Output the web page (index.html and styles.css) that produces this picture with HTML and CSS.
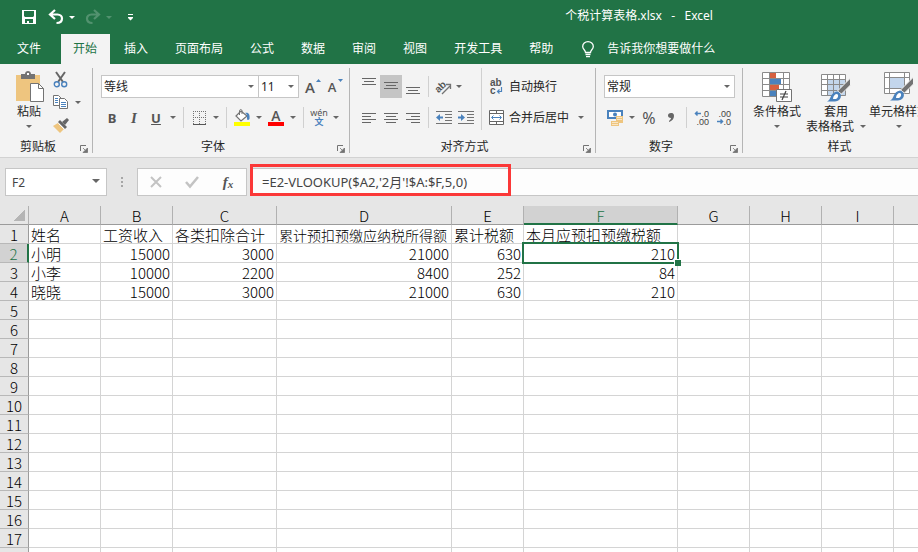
FILE: index.html
```html
<!DOCTYPE html>
<html lang="zh-CN">

  <head>
    <meta charset="UTF-8">
    <meta name="viewport" content="width=device-width, initial-scale=1.0">
    <title>个税计算表格.xlsx - Excel</title>
    <link rel="stylesheet" href="styles.css">
  </head>

  <body>
    <!-- 标题栏 -->
    <header class="titlebar">
      <div class="quick">
        <button class="tool" aria-label="保存">
          <svg width="14" height="14" viewBox="0 0 14 14"><path fill="#fff" fill-rule="evenodd" d="M0 0h14v14H0zM2 1v5l1 1h8l1-1V1zM3 9v4h2v-2h2v2h4V9z"/></svg>
        </button>
        <div class="split">
          <button class="tool" aria-label="撤消">
            <svg width="16" height="14" viewBox="0 0 16 14"><path d="M7 0L2 4.500L7 9M2.500 4.500H9.500C12.500 4.500 14 6.500 14 8.500C14 11 12 13 8.500 13" fill="none" stroke="#fff" stroke-width="2.200"/></svg>
          </button>
          <button class="drop" aria-label="撤消列表"></button>
        </div>
        <div class="split faded">
          <button class="tool" aria-label="恢复">
            <svg width="16" height="14" viewBox="0 0 16 14"><path d="M9 0L14 4.500L9 9M13.500 4.500H6.500C3.500 4.500 2 6.500 2 8.500C2 11 4 13 7.500 13" fill="none" stroke="#fff" stroke-width="2.200"/></svg>
          </button>
          <button class="drop" aria-label="恢复列表"></button>
        </div>
        <button class="tool" aria-label="自定义快速访问工具栏">
          <svg width="5" height="7" viewBox="0 0 5 7"><path d="M0 0h5v1H0zM0 3h5v1L2.500 6.500L0 4z" fill="#fff"/></svg>
        </button>
      </div>
      <div class="title">个税计算表格.xlsx&nbsp;&nbsp; - &nbsp;&nbsp;Excel</div>
    </header>

    <!-- 选项卡 -->
    <nav class="tabs">
      <button class="tab file">文件</button>
      <button class="tab on">开始</button>
      <button class="tab">插入</button>
      <button class="tab">页面布局</button>
      <button class="tab">公式</button>
      <button class="tab">数据</button>
      <button class="tab">审阅</button>
      <button class="tab">视图</button>
      <button class="tab">开发工具</button>
      <button class="tab">帮助</button>
      <button class="tell">
        <svg width="12" height="17" viewBox="0 0 12 17"><path d="M3.500 11.500C3.500 9 .7 8.500 .7 5.500a5.300 4.900 0 0 1 10.600 0C11.300 8.500 8.500 9 8.500 11.500zM3.500 13.500h5M4 15.700h4" fill="none" stroke="#fff" stroke-width="1.300"/></svg>
        告诉我你想要做什么
      </button>
    </nav>

    <!-- 功能区 -->
    <div class="ribbon">
      <section class="group clipboard">
        <div class="body">
          <button class="big paste">
            <svg width="30" height="31" viewBox="0 0 30 31">
              <path d="M2 4h24v26H2z" fill="#eec57f"/>
              <path d="M7 3h4c0-4 6-4 6 0h4v5H7z" fill="#737373"/>
              <path d="M13 2h2v2h-2z" fill="#fff"/>
              <path d="M16.500 12.500h8l5 5v13h-13z" fill="#fff" stroke="#737373"/>
              <path d="M24.500 12.500v5h5" fill="none" stroke="#737373"/>
            </svg>
            <span>粘贴</span>
            <i class="arrow"></i>
          </button>
          <div class="edit">
            <button class="tool" aria-label="剪切">
              <svg width="16" height="16" viewBox="0 0 16 16"><path d="M3 0l7 10M12 0L5 10" stroke="#666" stroke-width="2"/><circle cx="3.800" cy="12.300" r="2.500" fill="none" stroke="#4a82bd" stroke-width="1.400"/><circle cx="11.200" cy="12.300" r="2.500" fill="none" stroke="#4a82bd" stroke-width="1.400"/></svg>
            </button>
            <div class="split">
              <button class="tool" aria-label="复制">
                <svg width="16" height="15" viewBox="0 0 16 15"><path d="M.5.500h5l3 3v7h-8z" fill="#fff" stroke="#737373"/><path d="M2 3.500h3M2 5.500h3M2 7.500h3" stroke="#4a82bd"/><path d="M6.500 3.500h5l3 3v7h-8z" fill="#fff" stroke="#737373"/><path d="M8 7.500h5M8 9.500h5M8 11.500h5" stroke="#4a82bd"/></svg>
              </button>
              <button class="drop" aria-label="复制选项"></button>
            </div>
            <button class="tool" aria-label="格式刷">
              <svg width="16" height="15" viewBox="0 0 16 15"><path d="M0 8l5-3 6 6-4 4z" fill="#eec57f"/><path d="M5 4l2-2 7 7-2 2z" fill="#666"/><path d="M9 4l5-4 2 2-4 5z" fill="#666"/><path d="M5.500 5.500l5.500 5.500" stroke="#fff"/></svg>
            </button>
          </div>
        </div>
        <footer><span>剪贴板</span><button class="launch" aria-label="剪贴板设置"><svg width="8" height="8" viewBox="0 0 8 8"><path d="M.5 6V.500H6" fill="none" stroke="#737373"/><path d="M3 3l2 2M7.500 3v4.500H3z" fill="#737373" stroke="#737373" stroke-width=".8"/></svg></button></footer>
      </section>

      <section class="group font">
        <div class="body rows">
          <div class="row">
            <span class="combo family"><select aria-label="字体"><option>等线</option></select></span>
            <span class="combo size"><select aria-label="字号"><option>11</option></select></span>
            <button class="tool" aria-label="增大字号"><span class="letter big-a">A</span><svg class="mark" width="5" height="3" viewBox="0 0 5 3"><path d="M0 3L2.500 0L5 3z" fill="#4a82bd"/></svg></button>
            <button class="tool" aria-label="减小字号"><span class="letter">A</span><svg class="mark" width="5" height="3" viewBox="0 0 5 3"><path d="M0 0L2.500 3L5 0z" fill="#4a82bd"/></svg></button>
          </div>
          <div class="row">
            <button class="tool bold">B</button>
            <button class="tool italic">I</button>
            <button class="tool under">U</button>
            <button class="drop" aria-label="下划线类型"></button>
            <i class="sep"></i>
            <button class="tool" aria-label="边框">
              <svg width="13" height="14" viewBox="0 0 13 14" shape-rendering="crispEdges"><path d="M0 .500h13M0 6.500h13M.5 0v13M6.500 0v13M12.500 0v13" stroke="#737373" stroke-dasharray="1 1"/><path d="M0 13h13" stroke="#555" stroke-width="1"/></svg>
            </button>
            <button class="drop" aria-label="边框类型"></button>
            <i class="sep"></i>
            <button class="tool" aria-label="填充颜色">
              <svg width="16" height="17" viewBox="0 0 16 17"><path d="M2 7l5-5 6 5-6 5z" fill="#fff" stroke="#737373" stroke-width="1.200"/><path d="M5.500 6V2C5.500 0 8 0 8 2v3" fill="none" stroke="#737373"/><path d="M11 4c4-1 5 2 4.500 6-1.500 2-2.500 1-2.500-1 0-3 0-4-2-5z" fill="#4a82bd"/><path d="M0 13h16v4H0z" fill="#ff0"/></svg>
            </button>
            <button class="drop" aria-label="更多填充颜色"></button>
            <button class="tool stack" aria-label="字体颜色"><span class="letter color-a">A</span><i class="swatch"></i></button>
            <button class="drop" aria-label="更多字体颜色"></button>
            <i class="sep"></i>
            <button class="tool stack pinyin" aria-label="拼音"><span>wén</span><b>文</b></button>
            <button class="drop" aria-label="拼音选项"></button>
          </div>
        </div>
        <footer><span>字体</span><button class="launch" aria-label="字体设置"><svg width="8" height="8" viewBox="0 0 8 8"><path d="M.5 6V.500H6" fill="none" stroke="#737373"/><path d="M3 3l2 2M7.500 3v4.500H3z" fill="#737373" stroke="#737373" stroke-width=".8"/></svg></button></footer>
      </section>

      <section class="group align">
        <div class="body">
          <div class="rows">
            <div class="row">
              <button class="tool" aria-label="顶端对齐"><svg width="14" height="18" viewBox="0 0 14 18"><path d="M0 .500h14M2 3.500h10M0 6.500h14" stroke="#666"/></svg></button>
              <button class="tool pressed" aria-label="垂直居中"><svg width="14" height="18" viewBox="0 0 14 18"><path d="M0 4.500h14M2 7.500h10M0 10.500h14" stroke="#666"/></svg></button>
              <button class="tool" aria-label="底端对齐"><svg width="14" height="18" viewBox="0 0 14 18"><path d="M0 9.500h14M2 12.500h10M0 15.500h14" stroke="#666"/></svg></button>
              <i class="sep"></i>
              <button class="tool" aria-label="方向"><svg width="18" height="18" viewBox="0 0 18 18"><text x="0" y="11" transform="rotate(-45 7 9)" class="tilt">ab</text><path d="M7 16L15 8M11 6.500H15.500V11" fill="none" stroke="#737373" stroke-width="1.300"/></svg></button>
              <button class="drop tight" aria-label="方向选项"></button>
            </div>
            <div class="row">
              <button class="tool" aria-label="左对齐"><svg width="14" height="12" viewBox="0 0 14 12"><path d="M0 1.500h14M0 4.500h9M0 7.500h14M0 10.500h9" stroke="#666"/></svg></button>
              <button class="tool" aria-label="居中"><svg width="14" height="12" viewBox="0 0 14 12"><path d="M0 1.500h14M2 4.500h10M0 7.500h14M2 10.500h10" stroke="#666"/></svg></button>
              <button class="tool" aria-label="右对齐"><svg width="14" height="12" viewBox="0 0 14 12"><path d="M0 1.500h14M5 4.500h9M0 7.500h14M5 10.500h9" stroke="#666"/></svg></button>
              <i class="sep"></i>
              <button class="tool" aria-label="减少缩进"><svg width="16" height="14" viewBox="0 0 16 14"><path d="M0 .500h16M9 3.500h7M9 6.500h7M9 9.500h7M0 12.500h16" stroke="#737373"/><path d="M0 6.500L4 3v2.500h3v2H4V10z" fill="#4a82bd"/></svg></button>
              <button class="tool" aria-label="增加缩进"><svg width="16" height="14" viewBox="0 0 16 14"><path d="M0 .500h16M9 3.500h7M9 6.500h7M9 9.500h7M0 12.500h16" stroke="#737373"/><path d="M7 6.500L3 3v2.500H0v2h3V10z" fill="#4a82bd"/></svg></button>
            </div>
          </div>
          <div class="rows wide">
            <button class="text">
              <svg width="16" height="18" viewBox="0 0 16 18"><text x="1" y="8" class="mini">ab</text><text x="1" y="16" class="mini">c</text><path d="M12.500 9v4.500H8.500M10.500 11.500l-2 2 2 2" fill="none" stroke="#4a82bd" stroke-width="1.200"/></svg>
              自动换行
            </button>
            <div class="split">
              <button class="text">
                <svg width="16" height="16" viewBox="0 0 16 16"><path d="M.5.500h14v14H.500zM.5 3.500h14M.5 11.500h14M7.500 0v3.500M7.500 11.500v3.500" fill="#fff" stroke="#666"/><path d="M3 7.500h9M4.500 5.500l-2 2 2 2M10.500 5.500l2 2-2 2" fill="none" stroke="#4a82bd"/></svg>
                合并后居中
              </button>
              <button class="drop" aria-label="合并选项"></button>
            </div>
          </div>
        </div>
        <footer><span>对齐方式</span><button class="launch" aria-label="对齐设置"><svg width="8" height="8" viewBox="0 0 8 8"><path d="M.5 6V.500H6" fill="none" stroke="#737373"/><path d="M3 3l2 2M7.500 3v4.500H3z" fill="#737373" stroke="#737373" stroke-width=".8"/></svg></button></footer>
      </section>

      <section class="group number">
        <div class="body rows">
          <div class="row">
            <span class="combo format"><select aria-label="数字格式"><option>常规</option></select></span>
          </div>
          <div class="row">
            <button class="tool" aria-label="会计数字格式">
              <svg width="16" height="16" viewBox="0 0 16 16"><path d="M1 1h14v7H1z" fill="#fff" stroke="#4a82bd" stroke-width="2"/><circle cx="8" cy="4.500" r="2" fill="#4a82bd"/><path d="M9 6h7v7h-4v3H4v-5h5z" fill="#eec57f"/><path d="M10 7.500h5M10 9.500h5M5 12.500h6M5 14.500h6" stroke="#f9e6c6"/></svg>
            </button>
            <button class="drop" aria-label="更多货币"></button>
            <button class="tool percent">%</button>
            <button class="tool" aria-label="千位分隔样式"><svg width="6" height="9" viewBox="0 0 6 9"><path d="M3 0c3 0 3 2 3 3C6 6 4 8 1 9V8c1-1 2-2 2-3C-1 5-1 0 3 0z" fill="#666"/></svg></button>
            <i class="sep"></i>
            <button class="tool" aria-label="增加小数位数"><svg width="16" height="18" viewBox="0 0 16 18"><text x="15" y="8" text-anchor="end" class="digit">.0</text><text x="15" y="16" text-anchor="end" class="digit">.00</text><path d="M1 4.500h6M3.500 2.500l-2 2 2 2" fill="none" stroke="#4a82bd" stroke-width="1.500"/></svg></button>
            <button class="tool" aria-label="减少小数位数"><svg width="16" height="18" viewBox="0 0 16 18"><text x="15" y="8" text-anchor="end" class="digit">.00</text><text x="15" y="16" text-anchor="end" class="digit">.0</text><path d="M1 12.500h6M4.500 10.500l2 2-2 2" fill="none" stroke="#4a82bd" stroke-width="1.500"/></svg></button>
          </div>
        </div>
        <footer><span>数字</span><button class="launch" aria-label="数字设置"><svg width="8" height="8" viewBox="0 0 8 8"><path d="M.5 6V.500H6" fill="none" stroke="#737373"/><path d="M3 3l2 2M7.500 3v4.500H3z" fill="#737373" stroke="#737373" stroke-width=".8"/></svg></button></footer>
      </section>

      <section class="group styles">
        <div class="body">
          <button class="big">
            <svg width="30" height="31" viewBox="0 0 30 31">
              <path d="M.5 1.500h27v24H.500zM.5 7.500h27M.5 13.500h27M.5 19.500h27M7.500 1v24M21.500 1v24" fill="#fff" stroke="#8a8a8a"/>
              <path d="M8 2h6v5H8zM8 14h9v5H8z" fill="#d6603f"/><path d="M8 8h11v5H8zM8 20h6v5H8z" fill="#4a82bd"/>
              <path d="M14.500 18.500h15v12h-15z" fill="#fff" stroke="#737373"/>
              <path d="M18 23h8M18 26h8M24 20l-4 9" stroke="#444" stroke-width="1.200"/>
            </svg>
            <span>条件格式</span>
            <i class="arrow"></i>
          </button>
          <button class="big">
            <svg width="30" height="31" viewBox="0 0 30 31">
              <path d="M.5 3.500h24v21H.500z" fill="#fff"/><path d="M7 9h18v16H7z" fill="#c3d6ec"/>
              <path d="M.5 3.500h24v21H.500zM.5 8.500h24M.5 13.500h24M.5 19.500h24M6.500 3v22M12.500 3v22M18.500 3v22" fill="none" stroke="#8a8a8a"/>
              <path d="M29.500 7v7l-9 9-4-3z" fill="#737373" stroke="#f3f3f3"/>
              <path d="M6 30.500c4-1 3-9 10-10 6 1 5 10-2 10z" fill="#4a82bd"/><path d="M12 28c0-3 2-5 4-5 2 1 1 4-1 5z" fill="#fff"/>
            </svg>
            <span>套用</span>
            <span class="with-arrow">表格格式<i class="arrow"></i></span>
          </button>
          <button class="big">
            <svg width="30" height="31" viewBox="0 0 30 31">
              <path d="M.5 1.500h25v21H.500z" fill="#fff"/><path d="M6 7h14v10H6z" fill="#c3d6ec"/>
              <path d="M.5 1.500h25v21H.500zM.5 6.500h25M.5 17.500h25M5.500 1v22M20.500 1v22" fill="none" stroke="#8a8a8a"/>
              <path d="M29.500 6v7l-9 9-4-3z" fill="#737373" stroke="#f3f3f3"/>
              <path d="M6 29.500c4-1 3-9 10-10 6 1 5 10-2 10z" fill="#4a82bd"/><path d="M12 27c0-3 2-5 4-5 2 1 1 4-1 5z" fill="#fff"/>
            </svg>
            <span>单元格样式</span>
            <i class="arrow"></i>
          </button>
        </div>
        <footer><span>样式</span></footer>
      </section>
    </div>

    <!-- 编辑栏 -->
    <div class="formula-bar">
      <div class="combo name"><input type="text" value="F2" aria-label="名称框"></div>
      <div class="grip"><i></i><i></i><i></i></div>
      <div class="actions">
        <button aria-label="取消"><svg width="12" height="12" viewBox="0 0 12 12"><path d="M1 1l10 10M11 1L1 11" stroke="#c3c3c3" stroke-width="2"/></svg></button>
        <button aria-label="输入"><svg width="14" height="12" viewBox="0 0 14 12"><path d="M1 6l4 4.500L13 1" fill="none" stroke="#c3c3c3" stroke-width="2.500"/></svg></button>
        <button class="fx" aria-label="插入函数">f<small>x</small></button>
      </div>
      <div class="formula">
        <input type="text" value="=E2-VLOOKUP($A2,'2月'!$A:$F,5,0)" aria-label="编辑栏">
        <span class="highlight"></span>
      </div>
    </div>

    <!-- 工作表 -->
    <main class="sheet">
      <table>
        <colgroup>
          <col class="c-head"><col class="c-std"><col class="c-std"><col class="c-c"><col class="c-d"><col class="c-std"><col class="c-f"><col class="c-std"><col class="c-std"><col class="c-std"><col>
        </colgroup>
        <thead>
          <tr><th class="corner"></th><th>A</th><th>B</th><th>C</th><th>D</th><th>E</th><th class="on">F</th><th>G</th><th>H</th><th>I</th><th></th></tr>
        </thead>
        <tbody>
          <tr><th>1</th><td>姓名</td><td>工资收入</td><td>各类扣除合计</td><td class="fit">累计预扣预缴应纳税所得额</td><td>累计税额</td><td>本月应预扣预缴税额</td><td></td><td></td><td></td><td></td></tr>
          <tr><th class="on">2</th><td>小明</td><td class="num">15000</td><td class="num">3000</td><td class="num">21000</td><td class="num">630</td><td class="num active">210</td><td></td><td></td><td></td><td></td></tr>
          <tr><th>3</th><td>小李</td><td class="num">10000</td><td class="num">2200</td><td class="num">8400</td><td class="num">252</td><td class="num">84</td><td></td><td></td><td></td><td></td></tr>
          <tr><th>4</th><td>晓晓</td><td class="num">15000</td><td class="num">3000</td><td class="num">21000</td><td class="num">630</td><td class="num">210</td><td></td><td></td><td></td><td></td></tr>
          <tr><th>5</th><td></td><td></td><td></td><td></td><td></td><td></td><td></td><td></td><td></td><td></td></tr>
          <tr><th>6</th><td></td><td></td><td></td><td></td><td></td><td></td><td></td><td></td><td></td><td></td></tr>
          <tr><th>7</th><td></td><td></td><td></td><td></td><td></td><td></td><td></td><td></td><td></td><td></td></tr>
          <tr><th>8</th><td></td><td></td><td></td><td></td><td></td><td></td><td></td><td></td><td></td><td></td></tr>
          <tr><th>9</th><td></td><td></td><td></td><td></td><td></td><td></td><td></td><td></td><td></td><td></td></tr>
          <tr><th>10</th><td></td><td></td><td></td><td></td><td></td><td></td><td></td><td></td><td></td><td></td></tr>
          <tr><th>11</th><td></td><td></td><td></td><td></td><td></td><td></td><td></td><td></td><td></td><td></td></tr>
          <tr><th>12</th><td></td><td></td><td></td><td></td><td></td><td></td><td></td><td></td><td></td><td></td></tr>
          <tr><th>13</th><td></td><td></td><td></td><td></td><td></td><td></td><td></td><td></td><td></td><td></td></tr>
          <tr><th>14</th><td></td><td></td><td></td><td></td><td></td><td></td><td></td><td></td><td></td><td></td></tr>
          <tr><th>15</th><td></td><td></td><td></td><td></td><td></td><td></td><td></td><td></td><td></td><td></td></tr>
          <tr><th>16</th><td></td><td></td><td></td><td></td><td></td><td></td><td></td><td></td><td></td><td></td></tr>
          <tr><th>17</th><td></td><td></td><td></td><td></td><td></td><td></td><td></td><td></td><td></td><td></td></tr>
          <tr><th></th><td></td><td></td><td></td><td></td><td></td><td></td><td></td><td></td><td></td><td></td></tr>
        </tbody>
      </table>
    </main>
  </body>

</html>
```
FILE: styles.css
```css
* {
  margin: 0;
  padding: 0;
  box-sizing: border-box;
}

body {
  display: flex;
  flex-direction: column;
  height: 100vh;
  overflow: hidden;
  background: #fff;
  color: #262626;
  font: 12px/16px "Noto Sans", "Noto Sans CJK SC", sans-serif;
}

button,
input,
select {
  border: 0;
  border-radius: 0;
  background: none;
  color: inherit;
  font: inherit;
  white-space: nowrap;
}

svg {
  display: block;
  flex: none;
  overflow: visible;
}

/* 标题栏 */
.titlebar {
  display: flex;
  align-items: center;
  height: 34px;
  background: #217346;
  color: #fff;
}

.quick {
  display: flex;
  gap: 5px;
  width: 360px;
  padding-left: 18px;
}

.split {
  display: flex;
}

.quick .drop {
  width: 10px;
}

.faded {
  opacity: 0.22;
}

.title {
  flex: 1;
  padding-bottom: 2px;
  text-align: center;
  white-space: nowrap;
}

/* 选项卡 */
.tabs {
  display: flex;
  gap: 2px;
  height: 30px;
  background: #217346;
  color: #fff;
}

.tab {
  padding: 0 13px 1px 12px;
}

.tab.file {
  padding: 0 18px 1px 17px;
}

.tab.on {
  background: #f3f3f3;
  color: #217346;
}

.tell {
  display: flex;
  align-items: center;
  gap: 13px;
  padding-left: 14px;
}

/* 功能区 */
.ribbon {
  display: flex;
  height: 94px;
  padding: 4px 0;
  overflow: hidden;
  border-bottom: 1px solid #d2d2d2;
  background: #f3f3f3;
}

.group {
  display: flex;
  flex: none;
  flex-direction: column;
  border-right: 1px solid #b5b5b5;
}

.clipboard {
  width: 93px;
}

.font {
  width: 257px;
}

.align {
  width: 246px;
}

.number {
  width: 147px;
}

.styles {
  width: 194px;
}

.body {
  display: flex;
  flex: 1;
  padding-left: 8px;
}

.styles .body {
  gap: 3px;
}

.rows {
  display: flex;
  flex-direction: column;
  gap: 8px;
  padding-top: 7px;
}

.row {
  display: flex;
  align-items: center;
  height: 23px;
}

.group footer {
  display: flex;
  height: 12px;
  line-height: 12px;
}

.group footer span {
  flex: 1;
  text-align: center;
}

.launch {
  display: flex;
  align-items: flex-end;
  width: 12px;
  margin-left: 4px;
}

.tool {
  position: relative;
  display: flex;
  align-items: center;
  justify-content: center;
  width: 22px;
  height: 23px;
  color: #555;
}

.tool.pressed {
  background: #c5c5c5;
}

.drop {
  display: flex;
  align-items: center;
  justify-content: center;
  width: 12px;
  height: 23px;
}

.drop.tight {
  width: 8px;
}

.arrow,
.drop::before,
.combo::after {
  content: "";
  border: 3px solid transparent;
  border-top-color: #666;
  border-bottom: 0;
}

.quick .drop::before {
  border-top-color: #fff;
}

.sep {
  width: 1px;
  height: 21px;
  margin: 0 4px;
  background: #d0d0d0;
}

.big {
  display: flex;
  flex-direction: column;
  align-items: center;
  min-width: 52px;
  padding-top: 3px;
  line-height: 15px;
}

.big svg {
  margin-bottom: 2px;
}

.big > .arrow {
  margin-top: 6px;
}

.with-arrow {
  display: flex;
  align-items: center;
  gap: 6px;
}

.paste {
  min-width: 42px;
}

.edit {
  display: flex;
  flex-direction: column;
}

.combo {
  position: relative;
  height: 23px;
  border: 1px solid #c6c6c6;
  background: #fff;
}

.combo::after {
  position: absolute;
  top: 9px;
  right: 4px;
  pointer-events: none;
}

.combo select,
.combo input {
  width: 100%;
  height: 100%;
  padding-left: 2px;
  appearance: none;
}

.family {
  width: 158px;
}

.size {
  width: 40px;
  border-left: 0;
}

.format {
  width: 131px;
}

.letter {
  font: 600 13px/16px "Open Sans", sans-serif;
}

.big-a {
  font-size: 15px;
}

.mark {
  position: absolute;
  top: 4px;
  right: 0;
}

.bold {
  font-size: 13px;
  font-weight: bold;
}

.italic {
  font: italic bold 15px/16px "Liberation Serif", serif;
}

.under {
  font-size: 13px;
  font-weight: bold;
  text-decoration: underline;
}

.tool.stack {
  flex-direction: column;
}

.color-a {
  font-size: 14px;
  line-height: 12px;
}

.swatch {
  width: 16px;
  height: 4px;
  background: #f00;
}

.pinyin {
  font-size: 9px;
  line-height: 8px;
}

.pinyin b {
  color: #4a82bd;
  line-height: 9px;
}

.percent {
  font-size: 16px;
}

.tilt {
  fill: #555;
  font: bold 10px "Liberation Sans", sans-serif;
}

.mini {
  fill: #555;
  font: bold 10px "Liberation Sans", sans-serif;
}

.digit {
  fill: #444;
  font: 9px "Liberation Sans", sans-serif;
}

.align .rows:first-child {
  width: 123px;
}

.rows.wide {
  height: 62px;
  border-left: 1px solid #d0d0d0;
}

.text {
  display: flex;
  align-items: center;
  gap: 4px;
  height: 23px;
  padding-left: 7px;
}

.wide .drop {
  margin-left: 6px;
}

/* 编辑栏 */
.formula-bar {
  display: flex;
  height: 48px;
  padding: 10px 0;
  background: #e6e6e6;
  color: #444;
}

.combo.name {
  width: 102px;
  height: 28px;
  margin-left: 5px;
}

.name input {
  padding-left: 6px;
}

.combo.name::after {
  top: 10px;
  right: 6px;
  border-width: 4px 4px 0;
}

.grip {
  display: flex;
  flex-direction: column;
  align-items: center;
  justify-content: center;
  gap: 2px;
  width: 30px;
}

.grip i {
  width: 2px;
  height: 2px;
  background: #a6a6a6;
}

.actions {
  display: flex;
  width: 110px;
  border: 1px solid #c6c6c6;
  background: #fdfdfd;
}

.actions button {
  display: flex;
  flex: 1;
  align-items: center;
  justify-content: center;
}

.actions .fx {
  color: #555;
  font: italic bold 15px/20px "Liberation Serif", serif;
}

.fx small {
  padding-top: 3px;
  font-size: 11px;
}

.formula {
  position: relative;
  flex: 1;
  margin-left: 3px;
  border: 1px solid #c6c6c6;
  border-right: 0;
  background: #fdfdfd;
}

.formula input {
  width: 100%;
  height: 24px;
  padding-left: 11px;
  font-size: 13px;
}

.highlight {
  position: absolute;
  top: -5px;
  bottom: -1px;
  left: -1px;
  width: 261px;
  border: 3px solid #fb3838;
  pointer-events: none;
}

/* 工作表 */
.sheet {
  flex: 1;
  overflow: hidden;
}

table {
  width: 100%;
  border-spacing: 0;
  table-layout: fixed;
  color: #000;
  font: 300 15px/16px "Noto Sans CJK SC", sans-serif;
}

.c-head {
  width: 29px;
}

.c-std {
  width: 72px;
}

.c-c {
  width: 104px;
}

.c-d {
  width: 175px;
}

.c-f {
  width: 154px;
}

th,
td {
  height: 19px;
  padding-top: 2px;
  border-right: 1px solid #d4d4d4;
  border-bottom: 1px solid #d4d4d4;
  white-space: nowrap;
}

th {
  background: #e6e6e6;
  font-weight: inherit;
}

thead th {
  border-right-color: #b1b1b1;
  border-bottom-color: #9b9b9b;
}

tbody th {
  border-right-color: #9b9b9b;
  border-bottom-color: #b8b8b8;
}

th:last-child,
td:last-child {
  border-right: 0;
}

.corner {
  background: linear-gradient(135deg, transparent 50%, #b5b5b5 50%) 14px 4px / 11px 11px no-repeat #e6e6e6;
}

td {
  padding: 2px 2px 0;
}

.num {
  text-align: right;
}

.fit {
  font-size: 14px;
}

th.on {
  background: #d2d2d2;
  color: #217346;
}

thead th.on {
  border-bottom: 2px solid #217346;
  line-height: 15px;
}

tbody th.on {
  border-right: 2px solid #217346;
}

/* 选中的单元格 */
.active {
  position: relative;
}

.active::before {
  content: "";
  position: absolute;
  inset: -2px;
  border: 2px solid #217346;
}

.active::after {
  content: "";
  position: absolute;
  right: -4px;
  bottom: -4px;
  width: 6px;
  height: 6px;
  border: 1px solid #fff;
  border-width: 1px 0 0 1px;
  background: #217346;
}
```
